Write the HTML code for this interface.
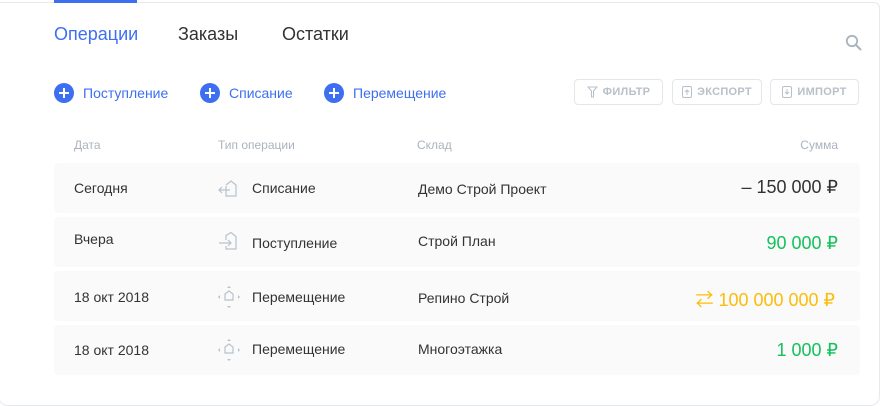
<!DOCTYPE html>
<html><head><meta charset="utf-8"><style>
*{margin:0;padding:0;box-sizing:border-box}
body{width:891px;height:406px;background:#fff;font-family:"Liberation Sans","Noto Sans CJK SC",sans-serif;position:relative;overflow:hidden}
.card{position:absolute;left:-2px;top:2px;width:882px;height:404px;border:1px solid #e6e8eb;border-radius:0 6px 10px 10px;background:#fff}
.a{position:absolute;white-space:nowrap}
.tab{font-size:18px;top:24px;color:#333}
.ul{position:absolute;left:54px;top:0;width:83px;height:3px;background:#3d6ff0}
.add{top:83px;font-size:14px;color:#3d6ff0;display:flex;align-items:center}
.add i{display:inline-block;width:20px;height:20px;border-radius:50%;background:#3d6ff0;margin-right:9px;position:relative}
.add i:before{content:"";position:absolute;left:5px;top:9px;width:10px;height:2px;background:#fff}
.add i:after{content:"";position:absolute;left:9px;top:5px;width:2px;height:10px;background:#fff}
.btn{position:absolute;top:79px;height:26px;border:1px solid #e3e6ea;border-radius:4px;font-size:11px;font-weight:bold;color:#b8c0c8;display:flex;align-items:center;justify-content:center;gap:5px;letter-spacing:.3px}
.h{top:138px;font-size:12px;color:#aab4be}
.row{position:absolute;left:54px;width:806px;height:50px;background:#fafafa;border-radius:4px}
.t{font-size:14px;color:#333}
.amt{font-size:18px;right:53px}
</style></head><body>
<div class="card"></div>
<div class="ul"></div>
<div class="a tab" style="left:54px;color:#3d6ff0">Операции</div>
<div class="a tab" style="left:178px">Заказы</div>
<div class="a tab" style="left:282px">Остатки</div>
<svg class="a" style="left:845px;top:34px" width="18" height="18" viewBox="0 0 18 18"><circle cx="7" cy="7" r="5.2" fill="none" stroke="#aab4be" stroke-width="1.8"/><path d="M11 11l5 5" stroke="#aab4be" stroke-width="2"/></svg>
<div class="a add" style="left:54px"><i></i>Поступление</div>
<div class="a add" style="left:200px"><i></i>Списание</div>
<div class="a add" style="left:324px"><i></i>Перемещение</div>
<div class="btn" style="left:574px;width:89px"><svg width="11" height="12" viewBox="0 0 11 12"><path d="M1 1h9L6.5 5v6h-2V5z" fill="none" stroke="#b8c0c8"/></svg>ФИЛЬТР</div>
<div class="btn" style="left:672px;width:90px"><svg width="10" height="12" viewBox="0 0 10 12"><rect x=".5" y=".5" width="9" height="11" rx="1.5" fill="none" stroke="#b8c0c8"/><path d="M5 9V4M3 6l2-2 2 2" fill="none" stroke="#b8c0c8"/></svg>ЭКСПОРТ</div>
<div class="btn" style="left:770px;width:89px"><svg width="10" height="12" viewBox="0 0 10 12"><rect x=".5" y=".5" width="9" height="11" rx="1.5" fill="none" stroke="#b8c0c8"/><path d="M5 3v5M3 6l2 2 2-2" fill="none" stroke="#b8c0c8"/></svg>ИМПОРТ</div>
<div class="a h" style="left:74px">Дата</div>
<div class="a h" style="left:218px">Тип операции</div>
<div class="a h" style="left:417px">Склад</div>
<div class="a h" style="right:53px">Сумма</div>

<div class="row" style="top:163px"></div>
<div class="row" style="top:217px"></div>
<div class="row" style="top:271px"></div>
<div class="row" style="top:325px"></div>

<div class="a t" style="left:74px;top:180px">Сегодня</div>
<div class="a t" style="left:74px;top:231px">Вчера</div>
<div class="a t" style="left:74px;top:289px">18 окт 2018</div>
<div class="a t" style="left:74px;top:342px">18 окт 2018</div>

<svg class="a" style="left:217px;top:178px" width="22" height="20" viewBox="0 0 22 20"><path d="M9 8V18h10V7l-5-4-5 4" fill="none" stroke="#b7c2cc" stroke-width="1.2"/><path d="M13 12H2M5 9l-3 3 3 3" fill="none" stroke="#b7c2cc" stroke-width="1.2"/></svg>
<svg class="a" style="left:217px;top:232px" width="22" height="20" viewBox="0 0 22 20"><path d="M9 8V3.5l5-3 5 4V17H9v-3" fill="none" stroke="#b7c2cc" stroke-width="1.2"/><path d="M2 11h12M11 8l3 3-3 3" fill="none" stroke="#b7c2cc" stroke-width="1.2"/></svg>
<svg class="a" style="left:217px;top:285px" width="24" height="24" viewBox="0 0 24 24"><path d="M8 9l4-3 4 3v6H8z" fill="none" stroke="#b7c2cc" stroke-width="1.2"/><path d="M12 1l2 2h-4zM12 23l2-2h-4zM1 12l2-2v4zM23 12l-2-2v4z" fill="#b7c2cc"/></svg>
<svg class="a" style="left:217px;top:338px" width="24" height="24" viewBox="0 0 24 24"><path d="M8 9l4-3 4 3v6H8z" fill="none" stroke="#b7c2cc" stroke-width="1.2"/><path d="M12 1l2 2h-4zM12 23l2-2h-4zM1 12l2-2v4zM23 12l-2-2v4z" fill="#b7c2cc"/></svg>

<div class="a t" style="left:252px;top:180px">Списание</div>
<div class="a t" style="left:252px;top:235px">Поступление</div>
<div class="a t" style="left:252px;top:289px">Перемещение</div>
<div class="a t" style="left:252px;top:341px">Перемещение</div>

<div class="a t" style="left:418px;top:181px">Демо Строй Проект</div>
<div class="a t" style="left:418px;top:233px">Строй План</div>
<div class="a t" style="left:418px;top:290px">Репино Строй</div>
<div class="a t" style="left:418px;top:341px">Многоэтажка</div>

<div class="a amt" style="top:177px;color:#333">– 150 000 ₽</div>
<div class="a amt" style="top:233px;color:#13c25c">90 000 ₽</div>
<div class="a amt" style="top:286px;color:#fbbd08;right:56px">⇄ 100 000 000 ₽</div>
<div class="a amt" style="top:340px;color:#13c25c">1 000 ₽</div>
</body></html>
